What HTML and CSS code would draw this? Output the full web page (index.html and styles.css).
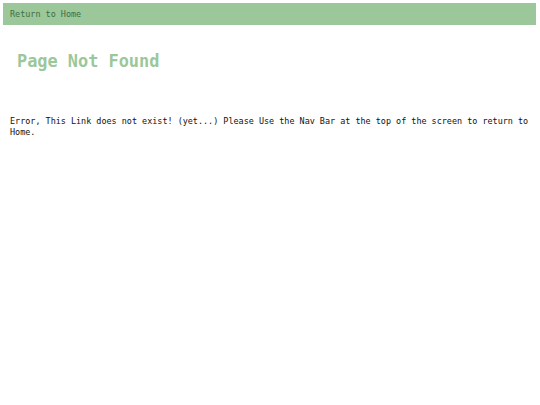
FILE: index.html
```html
<!DOCTYPE html>
<html>
<head>
<meta charset="utf-8">
<link rel="stylesheet" href="styles.css">
</head>
<body>
<nav class="navbar"><a class="nav-link" href="#">Return to Home</a></nav>
<h1 class="title">Page Not Found</h1>
<p class="message">Error, This Link does not exist! (yet...) Please Use the Nav Bar at the top of the screen to return to Home.</p>
</body>
</html>
```
FILE: styles.css
```css
html, body { background: #fff; }
body {
  margin: 3px 4px 3px 3px;
  font-family: "DejaVu Sans Mono", monospace;
  font-size: 8.45px;
}
.navbar {
  background: #9bc79a;
  height: 22px;
  display: flex;
  align-items: center;
  padding-left: 7px;
}
.nav-link {
  color: #3b7045;
  text-decoration: none;
  font-size: 8.45px;
  line-height: 1;
  margin-top: 1px;
}
.title {
  margin: 26px 0 0 14px;
  font-size: 16.9px;
  font-weight: bold;
  color: #9bc79a;
  line-height: 20px;
}
.message {
  margin: 45px 0 0 7px;
  color: #111;
  line-height: 10.5px;
}
```
